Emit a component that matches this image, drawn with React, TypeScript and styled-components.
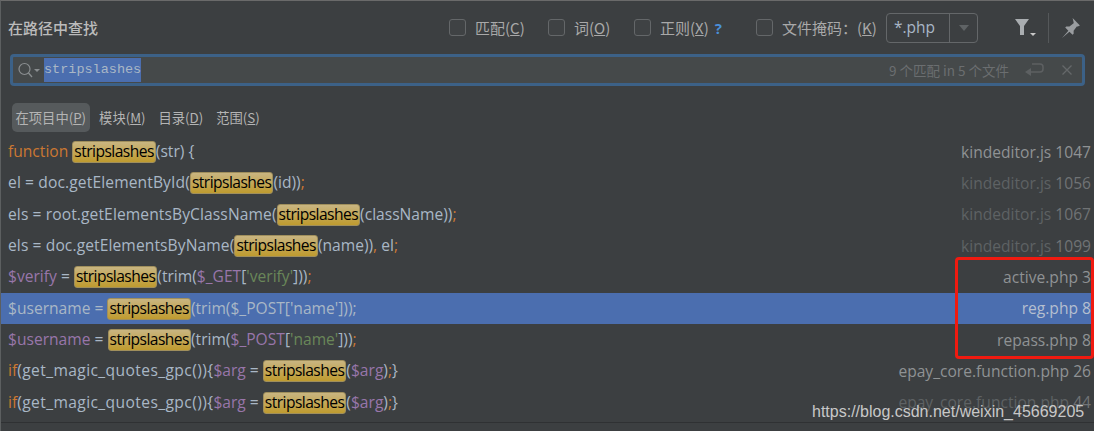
import React from "react";
import styled, { createGlobalStyle } from "styled-components";

const Global = createGlobalStyle`
  html, body { margin: 0; padding: 0; background: #3c3f41; }
  #root { width: 1094px; height: 431px; overflow: hidden; }
`;

const sans = `"Open Sans", "Noto Sans CJK SC", sans-serif`;
const cjk = `"Noto Sans CJK SC", "Open Sans", sans-serif`;

const Window = styled.div`
  position: relative;
  box-sizing: border-box;
  width: 1094px;
  height: 431px;
  overflow: hidden;
  background: #3c3f41;
  border-top: 1px solid #6a6a6a;
  border-left: 1px solid #5c5f60;
  display: flex;
  flex-direction: column;
  font-family: ${sans};
  color: #bbbbbb;
`;

const Header = styled.div`
  height: 41px;
  display: flex;
  align-items: center;
  padding: 0 13px 0 7px;
  flex: none;
  margin-top: 6px;
`;

const Title = styled.div`
  font-family: ${cjk};
  font-size: 15px;
  font-weight: 500;
  color: #bbbbbb;
  width: 441px;
  flex: none;
`;

const CheckLabel = styled.label<{ $w: number }>`
  display: flex;
  align-items: center;
  width: ${(p) => p.$w}px;
  flex: none;
  font-family: ${cjk};
  font-size: 15px;
  color: #a9a9a9;
  white-space: nowrap;
`;

const CheckBox = styled.span`
  box-sizing: border-box;
  width: 17px;
  height: 17px;
  border: 1px solid #646769;
  border-radius: 3px;
  margin-right: 9px;
  background: #3f4244;
  flex: none;
`;

const Help = styled.span`
  color: #4a8fd8;
  font-weight: 700;
  font-family: ${sans};
  margin-left: 6px;
`;

const Combo = styled.div`
  box-sizing: border-box;
  display: flex;
  width: 92px;
  height: 30px;
  border: 1px solid #646769;
  border-radius: 4px;
  flex: none;
`;

const ComboValue = styled.div`
  width: 63px;
  box-sizing: border-box;
  padding-left: 7px;
  line-height: 26px;
  font-size: 15.5px;
  color: #a9b7c6;
  border-right: 1px solid #646769;
`;

const ComboArrow = styled.div`
  flex: 1;
  display: flex;
  align-items: center;
  justify-content: center;
  &::after {
    content: "";
    border-left: 5px solid transparent;
    border-right: 5px solid transparent;
    border-top: 6px solid #5f6365;
  }
`;

const ToolIcon = styled.svg`
  flex: none;
  display: block;
`;

const Divider = styled.div`
  width: 1px;
  height: 30px;
  background: #55585a;
  margin: 0 12px 0 12px;
  flex: none;
`;

const SearchBox = styled.div`
  box-sizing: border-box;
  flex: none;
  margin: 6px 9px 0 9px;
  height: 32px;
  border: 3px solid #3c6187;
  border-radius: 4px;
  background: #45494a;
  display: flex;
  align-items: center;
  padding-left: 4px;
  padding-right: 9px;
`;

const SearchText = styled.span`
  margin-left: 3px;
  font-family: "Liberation Mono", monospace;
  font-size: 13.5px;
  line-height: 24px;
  color: #a9b7c6;
  background: #4b6eaf;
`;

const Spacer = styled.div`
  flex: 1;
`;

const MatchCount = styled.span`
  font-family: ${cjk};
  font-size: 13.5px;
  color: #6b6e70;
  margin-right: 15px;
`;

const CloseIcon = styled.svg`
  flex: none;
  margin-left: 17px;
`;

const Tabs = styled.div`
  flex: none;
  display: flex;
  align-items: center;
  gap: 6px;
  margin: 17px 0 0 11px;
  height: 29px;
`;

const Tab = styled.div<{ $active?: boolean }>`
  font-family: ${cjk};
  font-size: 13.3px;
  color: #b4b4b4;
  line-height: 29px;
  padding: 0 3.5px;
  border-radius: 5px;
  background: ${(p) => (p.$active ? "#565a5c" : "transparent")};
`;

const Results = styled.div`
  flex: none;
  margin-top: 4px;
  height: 283px;
  display: flex;
  flex-direction: column;
`;

const Row = styled.div<{ $selected?: boolean }>`
  flex: none;
  height: 31.33px;
  display: flex;
  align-items: center;
  justify-content: space-between;
  padding: 0 3px 0 7px;
  font-size: 15.6px;
  white-space: nowrap;
  color: #a9b7c6;
  background: ${(p) => (p.$selected ? "#4b6eaf" : "transparent")};
`;

const Kw = styled.span`
  color: #cc7832;
`;
const Var = styled.span`
  color: #9876aa;
`;
const Str = styled.span`
  color: #6a8759;
`;
const Spaced = styled.span<{ $ls: number }>`
  letter-spacing: ${(p) => p.$ls}px;
`;
const Hit = styled.span`
  display: inline-block;
  box-sizing: border-box;
  height: 22px;
  line-height: 19px;
  padding: 0 1px;
  letter-spacing: -0.55px;
  color: #000;
  border: 1px solid #a08f5c;
  border-radius: 3px;
  background: linear-gradient(#c9b581, #bf9b2f);
`;

const Location = styled.span<{ $tone: "bright" | "dim" | "selected" }>`
  color: ${(p) =>
    p.$tone === "dim" ? "#5e6264" : p.$tone === "selected" ? "#b5bfcf" : "#8f9294"};
`;
const LineNo = styled.span<{ $tone: "bright" | "dim" | "selected" }>`
  color: ${(p) =>
    p.$tone === "dim" ? "#707375" : p.$tone === "selected" ? "#b5bfcf" : "#8f9294"};
`;

const Footer = styled.div`
  flex: none;
  height: 1px;
  margin-top: auto;
  margin-bottom: 8px;
  background: #2f3133;
`;

const RedMark = styled.div`
  position: absolute;
  box-sizing: border-box;
  left: 954px;
  top: 256px;
  width: 139px;
  height: 102px;
  border: 3px solid #f01a10;
  border-radius: 4px;
`;

const Watermark = styled.div`
  position: absolute;
  left: 811px;
  top: 401px;
  font-family: "Liberation Sans", sans-serif;
  font-size: 16px;
  line-height: 20px;
  color: #c8c8c8;
`;

const S = "stripslashes";

type Loc = { name: string; line: number; tone: "bright" | "dim" | "selected" };

const rows: { code: React.ReactNode; loc: Loc; selected?: boolean }[] = [
  {
    code: (<><Kw>function</Kw> <Hit>{S}</Hit>(str) {"{"}</>),
    loc: { name: "kindeditor.js", line: 1047, tone: "bright" },
  },
  {
    code: (<><Spaced $ls={0.12}>el = doc.getElementById(</Spaced><Hit>{S}</Hit>(id))<Kw>;</Kw></>),
    loc: { name: "kindeditor.js", line: 1056, tone: "dim" },
  },
  {
    code: (<><Spaced $ls={0.1}>els = root.getElementsByClassName(</Spaced><Hit>{S}</Hit>(className))<Kw>;</Kw></>),
    loc: { name: "kindeditor.js", line: 1067, tone: "dim" },
  },
  {
    code: (<><Spaced $ls={0.1}>els = doc.getElementsByName(</Spaced><Hit>{S}</Hit>(name))<Kw>,</Kw> el<Kw>;</Kw></>),
    loc: { name: "kindeditor.js", line: 1099, tone: "dim" },
  },
  {
    code: (<><Var>$verify</Var> = <Hit>{S}</Hit>(trim(<Var>$_GET</Var>[<Str>'verify'</Str>]))<Kw>;</Kw></>),
    loc: { name: "active.php", line: 3, tone: "bright" },
  },
  {
    code: (<>$username = <Hit>{S}</Hit>(trim($_POST['name']));</>),
    loc: { name: "reg.php", line: 8, tone: "selected" },
    selected: true,
  },
  {
    code: (<><Var>$username</Var> = <Hit>{S}</Hit>(trim(<Var>$_POST</Var>[<Str>'name'</Str>]))<Kw>;</Kw></>),
    loc: { name: "repass.php", line: 8, tone: "bright" },
  },
  {
    code: (<><Kw>if</Kw><Spaced $ls={0.4}>(get_magic_quotes_gpc()){"{"}</Spaced><Var>$arg</Var> = <Hit>{S}</Hit>(<Var>$arg</Var>)<Kw>;</Kw>{"}"}</>),
    loc: { name: "epay_core.function.php", line: 26, tone: "bright" },
  },
  {
    code: (<><Kw>if</Kw><Spaced $ls={0.4}>(get_magic_quotes_gpc()){"{"}</Spaced><Var>$arg</Var> = <Hit>{S}</Hit>(<Var>$arg</Var>)<Kw>;</Kw>{"}"}</>),
    loc: { name: "epay_core.function.php", line: 44, tone: "dim" },
  },
];

export default function App() {
  return (
    <Window>
      <Global />
      <Header>
        <Title>在路径中查找</Title>
        <CheckLabel $w={99}><CheckBox />匹配(<u>C</u>)</CheckLabel>
        <CheckLabel $w={86}><CheckBox />词(<u>O</u>)</CheckLabel>
        <CheckLabel $w={122}><CheckBox />正则(<u>X</u>)<Help>?</Help></CheckLabel>
        <CheckLabel $w={130}><CheckBox />文件掩码：(<u>K</u>)</CheckLabel>
        <Combo>
          <ComboValue>*.php</ComboValue>
          <ComboArrow />
        </Combo>
        <Spacer />
        <ToolIcon width="21" height="20" viewBox="0 0 21 20">
          <path d="M0 1h14L9 8v9H5V8z" fill="#a9adb0" />
          <path d="M15 15h6l-3 3z" fill="#c8c8c8" />
        </ToolIcon>
        <Divider />
        <ToolIcon width="20" height="21" viewBox="0 0 19 20">
          <path d="M11 1l7 7-2 1-1 0-3 4 0 3-1 1-3-3-7 6 6-7-3-3 1-1 3 0 4-3 0-1z" fill="#9a9da0" />
        </ToolIcon>
      </Header>
      <SearchBox>
        <svg width="24" height="18" viewBox="0 0 24 18">
          <circle cx="7.5" cy="8" r="5.5" fill="none" stroke="#8a8e90" strokeWidth="1.2" />
          <path d="M11.5 12l3.5 4" stroke="#8a8e90" strokeWidth="1.3" />
          <path d="M17 8h6l-3 3z" fill="#8a8e90" />
        </svg>
        <SearchText>{S}</SearchText>
        <Spacer />
        <MatchCount>9 个匹配 in 5 个文件</MatchCount>
        <svg width="20" height="16" viewBox="0 0 20 16">
          <path d="M8 2h8a3 3 0 0 1 3 3v2a3 3 0 0 1-3 3H4" fill="none" stroke="#5d6062" strokeWidth="1.5" />
          <path d="M7 6v8L1 10z" fill="#5d6062" />
        </svg>
        <CloseIcon width="12" height="12" viewBox="0 0 12 12">
          <path d="M1.5 1.5l9 9M10.5 1.5l-9 9" stroke="#65686a" strokeWidth="1.3" />
        </CloseIcon>
      </SearchBox>
      <Tabs>
        <Tab $active>在项目中(<u>P</u>)</Tab>
        <Tab>模块(<u>M</u>)</Tab>
        <Tab>目录(<u>D</u>)</Tab>
        <Tab>范围(<u>S</u>)</Tab>
      </Tabs>
      <Results>
        {rows.map((r, i) => (
          <Row key={i} $selected={r.selected}>
            <span>{r.code}</span>
            <span>
              <Location $tone={r.loc.tone}>{r.loc.name}</Location>{" "}
              <LineNo $tone={r.loc.tone}>{r.loc.line}</LineNo>
            </span>
          </Row>
        ))}
      </Results>
      <Footer />
      <RedMark />
      <Watermark>https://blog.csdn.net/weixin_45669205</Watermark>
    </Window>
  );
}
